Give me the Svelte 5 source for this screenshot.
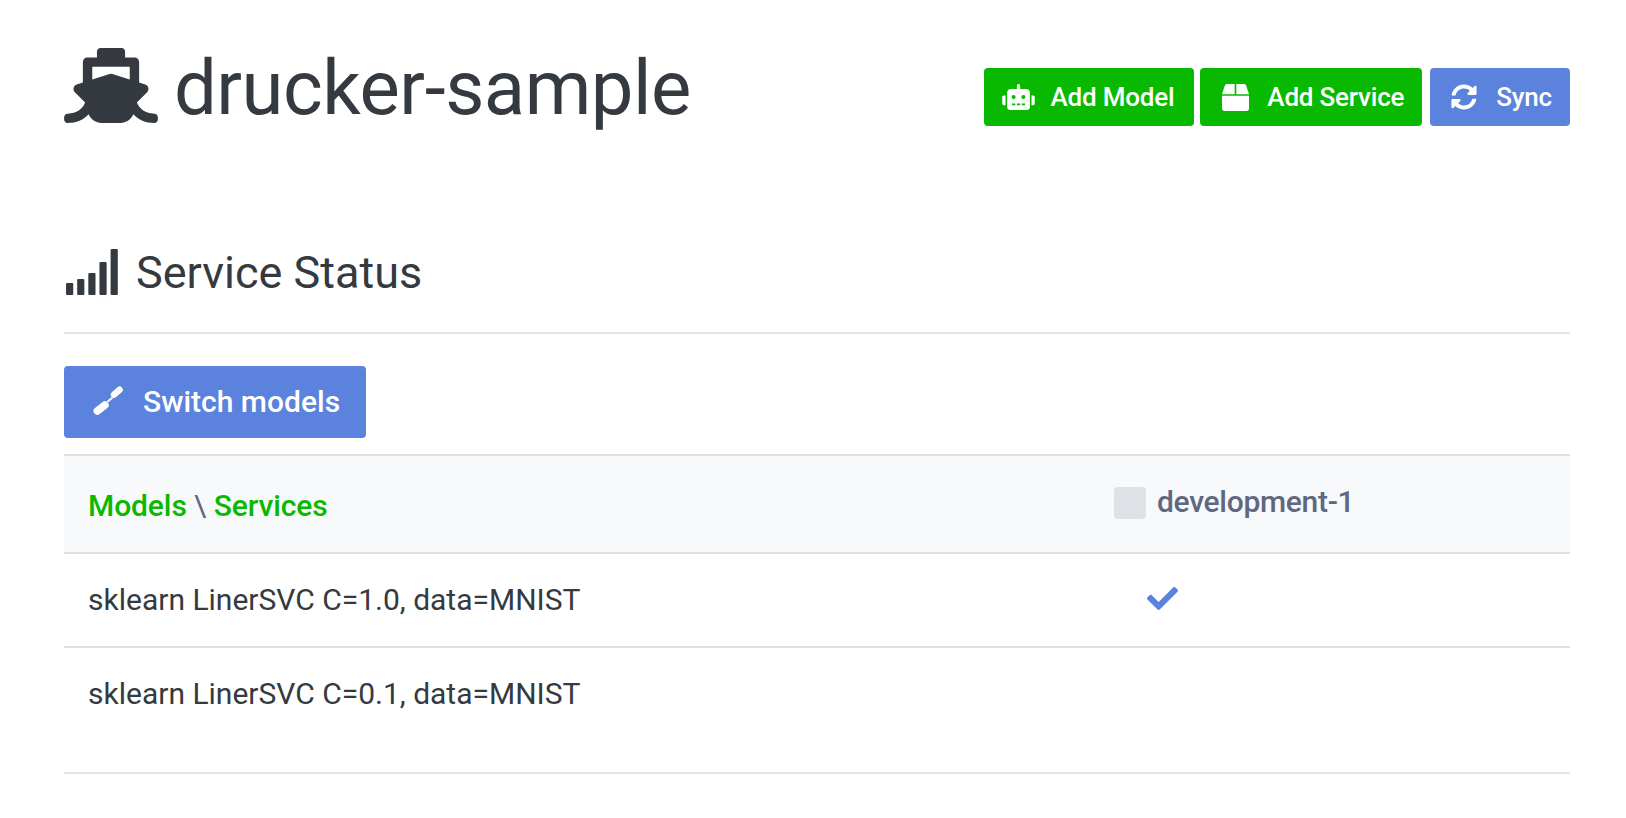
<script>
  const models = [
    { name: "sklearn LinerSVC C=1.0, data=MNIST", active: true },
    { name: "sklearn LinerSVC C=0.1, data=MNIST", active: false }
  ];
</script>

<div class="page">
  <header class="top">
    <h1 class="title">
      <svg class="ship" viewBox="0 0 640 512" aria-hidden="true"><path d="M496.616 372.639l70.012-70.012c16.899-16.9 9.942-45.771-12.836-53.092L512 236.102V96c0-17.673-14.327-32-32-32h-64V24c0-13.255-10.745-24-24-24H248c-13.255 0-24 10.745-24 24v40h-64c-17.673 0-32 14.327-32 32v140.102l-41.792 13.433c-22.753 7.313-29.754 36.173-12.836 53.092l70.012 70.012C125.828 416.287 85.587 448 24 448c-13.255 0-24 10.745-24 24v16c0 13.255 10.745 24 24 24 61.023 0 107.499-20.61 143.258-59.396C181.677 487.432 216.021 512 256 512h128c39.979 0 74.323-24.568 88.742-59.396C508.495 491.384 554.968 512 616 512c13.255 0 24-10.745 24-24v-16c0-13.255-10.745-24-24-24-60.817 0-101.542-31.001-119.384-75.361zM192 128h256v87.531l-118.208-37.995a32 32 0 0 0-19.585 0L192 215.531V128z"/></svg>
      drucker-sample
    </h1>
    <div class="actions">
      <button class="btn green add-model">
        <svg class="ico robot" viewBox="0 0 640 512" aria-hidden="true"><path d="M32,224H64V416H32A31.96166,31.96166,0,0,1,0,384V256A31.96166,31.96166,0,0,1,32,224Zm512-48V448a64.06328,64.06328,0,0,1-64,64H160a64.06328,64.06328,0,0,1-64-64V176a79.974,79.974,0,0,1,80-80H288V32a32,32,0,0,1,64,0V96H464A79.974,79.974,0,0,1,544,176ZM264,256a40,40,0,1,0-40,40A39.997,39.997,0,0,0,264,256Zm-8,128H192v32h64Zm96,0H288v32h64ZM456,256a40,40,0,1,0-40,40A39.997,39.997,0,0,0,456,256Zm-8,128H384v32h64ZM640,256V384a31.96166,31.96166,0,0,1-32,32H576V224h32A31.96166,31.96166,0,0,1,640,256Z"/></svg>
        Add Model
      </button>
      <button class="btn green add-service">
        <svg class="ico box" viewBox="0 0 512 512" aria-hidden="true"><path d="M509.5 184.6L458.9 32.8C452.4 13.2 434.1 0 413.4 0H272v192h238.7c-.4-2.5-.4-5-1.2-7.4zM240 0H98.6c-20.7 0-39 13.2-45.5 32.8L2.5 184.6c-.8 2.4-.8 4.9-1.2 7.4H240V0zM0 224v240c0 26.5 21.5 48 48 48h416c26.5 0 48-21.5 48-48V224H0z"/></svg>
        Add Service
      </button>
      <button class="btn blue sync-btn">
        <svg class="ico sync" viewBox="0 0 512 512" aria-hidden="true"><path d="M370.72 133.28C339.458 104.008 298.888 87.962 255.848 88c-77.458.068-144.328 53.178-162.791 126.85-1.344 5.363-6.122 9.15-11.651 9.15H24.103c-7.498 0-13.194-6.807-11.807-14.176C33.933 94.924 134.813 8 256 8c66.448 0 126.791 26.136 171.315 68.685L463.03 40.97C478.149 25.851 504 36.559 504 57.941V192c0 13.255-10.745 24-24 24H345.941c-21.382 0-32.09-25.851-16.971-40.971l41.75-41.749zM32 296h134.059c21.382 0 32.09 25.851 16.971 40.971l-41.75 41.75c31.262 29.273 71.835 45.319 114.876 45.28 77.418-.07 144.315-53.144 162.787-126.849 1.344-5.363 6.122-9.15 11.651-9.15h57.304c7.498 0 13.194 6.807 11.807 14.176C478.067 417.076 377.187 504 256 504c-66.448 0-126.791-26.136-171.315-68.685L48.97 471.03C33.851 486.149 8 475.441 8 454.059V320c0-13.255 10.745-24 24-24z"/></svg>
        Sync
      </button>
    </div>
  </header>

  <h2 class="section">
    <svg class="signal" viewBox="0 0 578 512" aria-hidden="true">
      <rect x="0" y="379" width="80" height="133" rx="12"/>
      <rect x="124" y="334" width="80" height="178" rx="12"/>
      <rect x="248" y="266" width="80" height="246" rx="12"/>
      <rect x="372" y="144" width="80" height="368" rx="12"/>
      <rect x="496" y="0" width="80" height="512" rx="12"/>
    </svg>
    Service Status
  </h2>
  <hr class="rule" />

  <button class="btn blue switch">
    <svg class="plug" viewBox="0 0 30 30" aria-hidden="true">
      <line x1="4.3" y1="25" x2="12" y2="19" stroke-width="7.5"/>
      <line x1="15" y1="15.2" x2="19" y2="12" stroke-width="2"/>
      <line x1="21" y1="8.6" x2="26.6" y2="3.8" stroke-width="6.5"/>
    </svg>
    Switch models
  </button>

  <table class="status">
    <thead>
      <tr>
        <th class="corner"><span class="link">Models</span> <span class="sep">\</span> <span class="link">Services</span></th>
        <th class="svc"><span class="svc-wrap"><span class="box-check"></span>development-1</span></th>
      </tr>
    </thead>
    <tbody>
      {#each models as m}
        <tr>
          <td>{m.name}</td>
          <td class="mark">
            {#if m.active}
              <svg class="check" viewBox="0 0 512 512" aria-hidden="true"><path d="M173.898 439.404l-166.4-166.4c-9.997-9.997-9.997-26.206 0-36.204l36.203-36.204c9.997-9.998 26.207-9.998 36.204 0L192 312.69 432.095 72.596c9.997-9.997 26.207-9.997 36.204 0l36.203 36.204c9.997 9.997 9.997 26.206 0 36.204l-294.4 294.401c-9.998 9.997-26.207 9.997-36.204-.001z"/></svg>
            {/if}
          </td>
        </tr>
      {/each}
    </tbody>
  </table>
</div>

<style>
  :global(body) {
    margin: 0;
    background: #fff;
    font-family: Roboto, "Liberation Sans", sans-serif;
    color: #343a40;
  }

  .page {
    padding: 0 56px 0 64px;
  }

  .top {
    display: flex;
    justify-content: space-between;
    align-items: flex-start;
    padding-top: 44px;
    height: 226px;
    box-sizing: border-box;
  }

  .title {
    margin: 0;
    display: flex;
    align-items: center;
    gap: 16px;
    font-size: 76px;
    font-weight: 400;
    line-height: 88px;
    letter-spacing: -0.5px;
    color: #343a40;
  }

  .ship {
    width: 94px;
    height: 75px;
    margin-top: -5px;
    fill: #343a40;
  }

  .actions {
    display: flex;
    padding-top: 24px;
  }

  .btn {
    display: inline-flex;
    align-items: center;
    border: none;
    border-radius: 4px;
    color: #fff;
    font-family: inherit;
    font-size: 26px;
    font-weight: 500;
    letter-spacing: -0.2px;
    height: 58px;
    padding: 0 18px;
    white-space: nowrap;
  }

  .green {
    background: #09b900;
  }

  .blue {
    background: #5b82dc;
  }

  .add-model {
    padding: 0 20px 0 18px;
  }

  .add-service {
    margin-left: 6px;
    padding-left: 22px;
  }

  .sync-btn {
    margin-left: 8px;
    padding-left: 21px;
  }

  .ico {
    fill: #fff;
    height: 26px;
    margin-right: 19px;
  }

  .robot {
    width: 33px;
    margin-right: 15px;
  }

  .box {
    width: 27px;
    height: 27px;
    margin-right: 18px;
  }

  .sync {
    width: 26px;
  }

  .section {
    margin: 0;
    display: flex;
    align-items: center;
    gap: 18px;
    font-size: 45px;
    font-weight: 400;
    height: 92px;
    color: #343a40;
  }

  .signal {
    width: 52px;
    height: 46px;
    margin-left: 2px;
    fill: #343a40;
  }

  .rule {
    margin: 14px 0 0;
    border: none;
    border-top: 2px solid #e3e4e6;
  }

  .switch {
    margin-top: 32px;
    height: 72px;
    font-size: 30px;
    letter-spacing: 0;
    padding: 0 26px 2px 29px;
    display: flex;
  }

  .plug {
    width: 30px;
    height: 30px;
    margin: 0 20px 0 0;
    stroke: #fff;
    stroke-linecap: round;
  }

  .status {
    width: 100%;
    margin-top: 16px;
    border-collapse: collapse;
    font-size: 30px;
    table-layout: fixed;
  }

  .status th {
    background: #f8f9fa;
    border-top: 2px solid #dee2e6;
    border-bottom: 2px solid #dee2e6;
    height: 94px;
    padding: 2px 24px 0;
    text-align: left;
    font-weight: 500;
    font-size: 30px;
    letter-spacing: -0.1px;
    color: #5f6781;
  }

  .corner {
    width: 977px;
  }

  .svc {
    padding-left: 25px !important;
  }

  .link {
    color: #09b900;
  }

  .sep {
    font-weight: 400;
  }

  .svc-wrap {
    display: flex;
    align-items: center;
    gap: 11px;
    position: relative;
    top: -4px;
    letter-spacing: -0.3px;
  }

  .box-check {
    width: 32px;
    height: 32px;
    border-radius: 4px;
    background: #dee2e6;
    position: relative;
    top: 2px;
  }

  .status td {
    padding: 24px;
    height: 44px;
    vertical-align: top;
    line-height: 44px;
    border-bottom: 2px solid #dee2e6;
    color: #343a40;
  }

  .status tbody tr:last-child td {
    height: 76px;
    border-bottom-color: #e3e4e6;
  }

  .mark {
    padding-left: 58px !important;
  }

  .check {
    width: 31px;
    height: 31px;
    fill: #5b82dc;
    display: block;
    margin-top: 5px;
  }
</style>
